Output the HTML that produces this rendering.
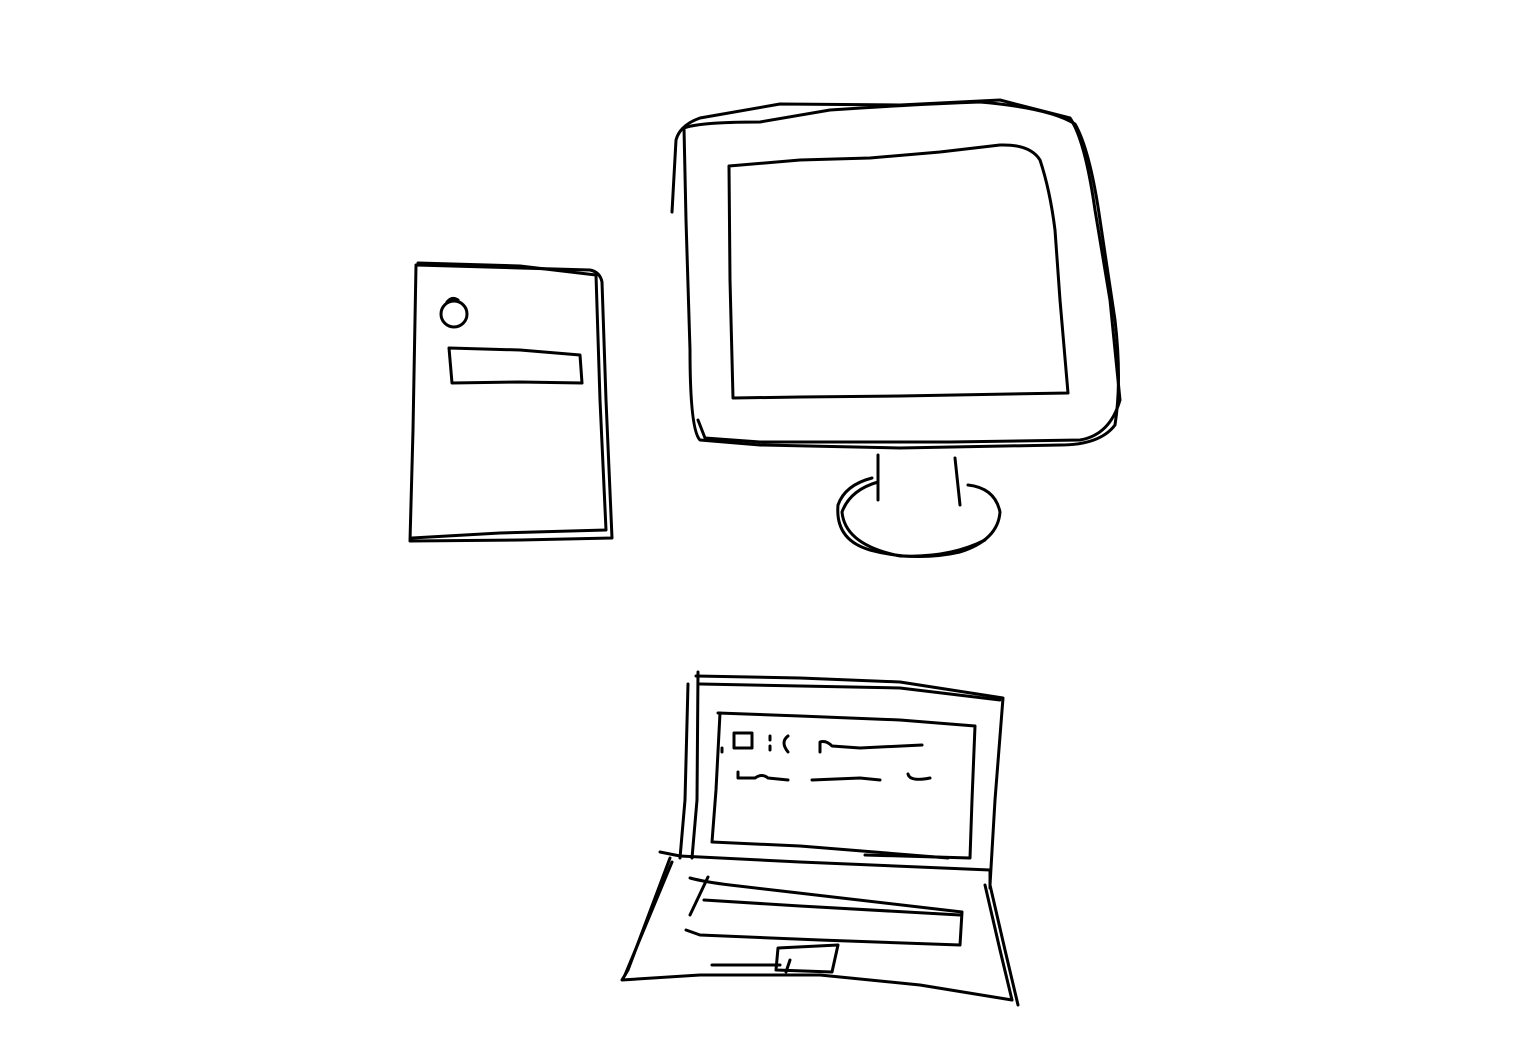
<!DOCTYPE html>
<html><head><meta charset="utf-8"><style>html,body{margin:0;padding:0;background:#fff}svg{display:block}</style></head>
<body>
<svg width="1536" height="1056" viewBox="0 0 1536 1056" xmlns="http://www.w3.org/2000/svg" fill="none" stroke="#000" stroke-width="3" stroke-linecap="round" stroke-linejoin="round">
<!-- tower -->
<path d="M416 265 L520 268 L590 270 Q600 272 602 282 L606 400 L612 538 L520 540 L410 541 L413 430 L416 265"/>
<path d="M418 263 L520 266 L596 275 L600 400 L606 530 L500 533 L412 538"/>
<circle cx="454" cy="314" r="13"/>
<path d="M447 302 Q452 296 458 300"/>
<path d="M449 348 L520 350 L580 355 L582 383 L520 382 L452 383 Z"/>
<!-- monitor -->
<path d="M684 128 Q700 122 760 122 L830 110 Q920 104 980 102 Q1050 108 1075 124 Q1090 150 1100 220 L1115 320 Q1122 380 1115 425 Q1100 445 1060 445 L900 448 L760 445 L700 440 Q690 430 690 350 L686 220 Z"/>
<path d="M672 212 L676 140 Q680 125 700 118 L780 104 L900 105 L1000 100 L1070 118 Q1085 140 1095 210 L1110 300 L1120 400 Q1110 435 1080 440 L950 442 L760 442 L705 438 L698 420"/>
<path d="M729 166 L800 160 L870 158 L940 152 L1000 145 Q1030 144 1040 160 Q1050 190 1055 230 L1060 300 L1068 393 L900 396 L800 397 L733 398 L730 280 Z"/>
<path d="M878 455 L878 500"/>
<path d="M955 458 L960 505"/>
<path d="M872 478 Q845 485 838 505 Q835 540 870 550 Q915 562 960 552 Q998 540 1000 512 Q995 488 968 485"/>
<path d="M878 482 Q850 490 842 512 Q845 545 900 556 Q950 558 985 540"/>
<!-- laptop lid -->
<path d="M696 676 L800 678 L900 682 L1003 698 L995 800 L990 885"/>
<path d="M688 684 L685 800 L680 858"/>
<path d="M698 672 L697 800 L692 858"/>
<path d="M700 684 L900 688 L1000 700"/>
<path d="M718 713 L800 716 L900 720 L975 726 L972 800 L970 858 L865 855"/>
<path d="M720 713 L716 790 L712 842 L800 846 L948 858"/>
<!-- screen content -->
<path d="M734 733 L752 733 L752 748 L734 748 Z"/>
<path d="M722 748 L722 752"/>
<path d="M770 736 L770 740 M770 746 L770 750"/>
<path d="M788 736 Q780 742 788 752"/>
<path d="M820 752 L820 742 Q826 740 832 746 L860 748 L922 745"/>
<path d="M738 772 L738 778 L755 778 Q762 773 768 778 L788 780"/>
<path d="M812 780 L860 778 L880 780"/>
<path d="M908 774 Q910 782 930 778"/>
<!-- laptop base -->
<path d="M660 852 L680 856 L800 862 L990 870 L990 888"/>
<path d="M670 858 L628 970 L622 980 L700 975 L820 975 L920 985 L1012 1000"/>
<path d="M990 885 L1005 950 L1018 1005"/>
<path d="M985 885 L1000 950 L1012 1000"/>
<path d="M672 862 L625 975"/>
<path d="M690 878 Q705 882 730 885 L962 912 L960 945 L820 940 L700 935 L686 930"/>
<path d="M708 877 L690 915"/>
<path d="M704 900 L800 906 L960 915"/>
<path d="M778 948 L838 945 L832 972 L776 970 Z"/>
<path d="M712 965 L780 965"/>
<path d="M790 960 L786 972"/>
</svg>
</body></html>
